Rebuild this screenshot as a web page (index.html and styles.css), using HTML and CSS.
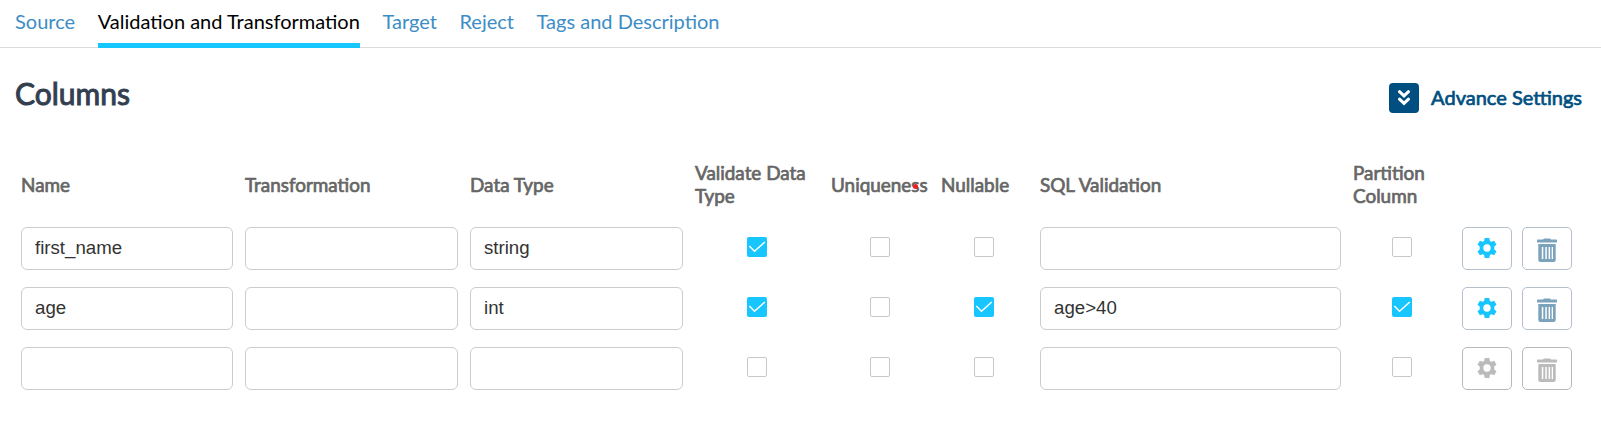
FILE: index.html
```html
<!DOCTYPE html>
<html lang="en">
<head>
<meta charset="utf-8">
<title>Validation and Transformation</title>
<link rel="stylesheet" href="styles.css">
</head>
<body>
<svg class="sprite" aria-hidden="true">
  <symbol id="gear" viewBox="0 0 20 20"><path fill-rule="evenodd" d="M7.7 0h4.6l.6 2.900 1.500.9 2.800-1L19.500 6.700l-2.200 1.900v2.800l2.200 1.900-2.300 3.900-2.800-1-1.500.9-.6 2.900H7.700l-.6-2.900-1.500-.9-2.800 1L.5 13.300l2.200-1.900V8.600L.5 6.700l2.300-3.900 2.800 1 1.500-.9zM10 6.300a3.700 3.700 0 1 0 0 7.400 3.700 3.700 0 0 0 0-7.400z"/></symbol>
  <symbol id="trash" viewBox="0 0 20 24"><path fill-rule="evenodd" d="M0 2.200Q0 1.500.7 1.500H6L7 .5h6l1 1h5.300q.7 0 .7.700V4.500H0zM1.300 6h17.400V22q0 2-2 2H3.300q-2 0-2-2zM4.800 9v12h1.500V9zm3.500 0v12h1.500V9zm3.300 0v12h1.500V9zm3.100 0v12h1.300V9z"/></symbol>
  <symbol id="tick" viewBox="0 0 20 20"><path d="M2.300 9l5.200 5.300L17.800 5" fill="none" stroke="#fff" stroke-width="1.500"/></symbol>
</svg>
<nav class="tabs">
  <a class="tab">Source</a>
  <a class="tab active">Validation and Transformation</a>
  <a class="tab">Target</a>
  <a class="tab">Reject</a>
  <a class="tab">Tags and Description</a>
</nav>
<header class="section-head">
  <h1 class="title">Columns</h1>
  <div class="advance">
    <span class="toggle"><svg width="30" height="30" viewBox="0 0 30 30"><path d="M10.500 8.700l4.500 4.200 4.500-4.200M10.500 16.200l4.500 4.200 4.500-4.200" fill="none" stroke="#fff" stroke-width="3.100" stroke-linecap="round"/></svg></span>
    <span class="advance-label">Advance Settings</span>
  </div>
</header>
<main class="table">
  <div class="row head">
    <span>Name</span><span>Transformation</span><span>Data Type</span><span>Validate Data Type</span><span class="unique">Uniqueness<i class="dot"></i></span><span>Nullable</span><span>SQL Validation</span><span>Partition Column</span><span></span>
  </div>
  <div class="row">
    <div class="field">first_name</div><div class="field"></div><div class="field">string</div>
    <span class="check on"><svg><use href="#tick"/></svg></span><span class="check"></span><span class="check nullable"></span>
    <div class="field"></div><span class="check"></span>
    <div class="actions"><span class="btn"><svg class="gear"><use href="#gear"/></svg></span><span class="btn"><svg class="trash"><use href="#trash"/></svg></span></div>
  </div>
  <div class="row">
    <div class="field">age</div><div class="field"></div><div class="field">int</div>
    <span class="check on"><svg><use href="#tick"/></svg></span><span class="check"></span><span class="check nullable on"><svg><use href="#tick"/></svg></span>
    <div class="field">age&gt;40</div><span class="check on"><svg><use href="#tick"/></svg></span>
    <div class="actions"><span class="btn"><svg class="gear"><use href="#gear"/></svg></span><span class="btn"><svg class="trash"><use href="#trash"/></svg></span></div>
  </div>
  <div class="row disabled">
    <div class="field"></div><div class="field"></div><div class="field"></div>
    <span class="check"></span><span class="check"></span><span class="check nullable"></span>
    <div class="field"></div><span class="check"></span>
    <div class="actions"><span class="btn"><svg class="gear"><use href="#gear"/></svg></span><span class="btn"><svg class="trash"><use href="#trash"/></svg></span></div>
  </div>
</main>
</body>
</html>
```
FILE: styles.css
```css
* { box-sizing: border-box; }
body { margin: 0; background: #fff; font-family: Lato, sans-serif; overflow: hidden; }
.sprite { display: none; }
svg { display: block; }
.tabs { display: flex; gap: 22.600px; height: 48px; padding-left: 15px; border-bottom: 1px solid #dcdcdc; }
.tab { height: 48px; padding-top: 9px; font-size: 20px; line-height: 24px; color: #3c8dc5; white-space: nowrap; }
.tab.active { color: #000; border-bottom: 5px solid #17c5ff; }
.section-head { display: flex; justify-content: space-between; height: 104px; padding: 27px 19px 0 15px; }
.title { margin: 0; font-size: 30px; line-height: 36px; font-weight: 400; color: #333f50; -webkit-text-stroke: 1px #333f50; }
.advance { display: flex; gap: 12px; height: 30px; margin-top: 8px; align-items: center; color: #004f80; }
.toggle { width: 30px; height: 30px; border-radius: 4px; background: #004f80; }
.advance-label { padding-bottom: 2px; font-size: 20px; line-height: 24px; -webkit-text-stroke: 0.700px #004f80; }
.table { display: grid; gap: 17px; padding-left: 21px; }
.row { display: grid; grid-template-columns: 212px 213px 213px 124px 98px 87px 301px 97px 110px; column-gap: 12px; height: 43px; align-items: center; }
.head { height: 58px; padding-top: 6px; font-size: 18.900px; line-height: 23px; color: #666; -webkit-text-stroke: 0.700px #666; }
.unique { position: relative; }
.dot { position: absolute; left: 82px; top: 11px; width: 5px; height: 5px; border-radius: 50%; background: #ee1c25; }
.field { height: 43px; padding: 0 13px; border: 1px solid #ccc; border-radius: 6px; font: 18.670px/39px "Liberation Sans", Arial, sans-serif; color: #333; }
.check { justify-self: center; width: 20px; height: 20px; margin-bottom: 3px; border: 1px solid #c8c8c8; border-radius: 2px; background: #fff; }
.check.nullable { margin-right: 1px; }
.check.on { border: 0; background: #17c5ff; }
.check svg { width: 20px; height: 20px; }
.actions { display: flex; gap: 10px; }
.btn { display: flex; justify-content: center; width: 50px; height: 43px; padding-top: 10px; border: 1px solid #b4c0cc; border-radius: 5px; }
.gear { width: 20px; height: 20px; fill: #17c5ff; }
.trash { width: 20px; height: 24px; fill: #7ba3bc; }
.disabled .btn { border-color: #b8b8b8; }
.disabled .btn svg { fill: #bbb; }
```
